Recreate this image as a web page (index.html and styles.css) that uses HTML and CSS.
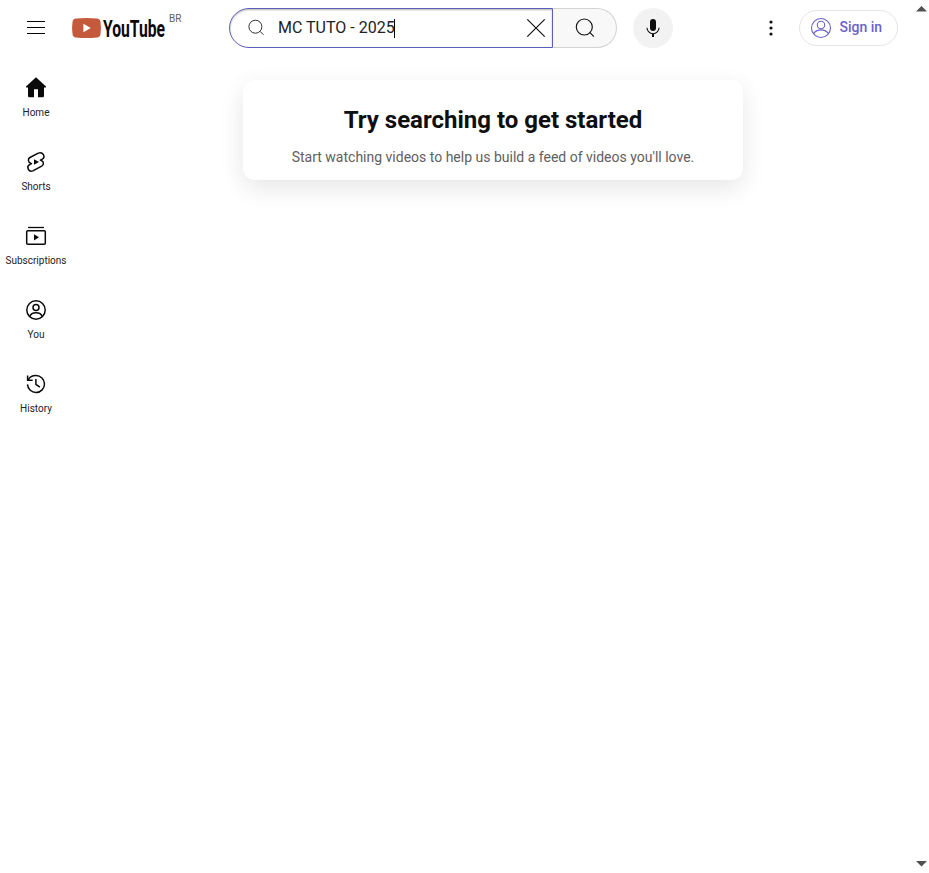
FILE: index.html
```html
<!DOCTYPE html>
<html lang="en">
<head>
<meta charset="utf-8">
<title>YouTube</title>
<link rel="stylesheet" href="styles.css">
</head>
<body>
<div class="app">
  <header class="masthead">
    <div class="start">
      <svg class="icon" viewBox="0 0 24 24"><path d="M3 5.5h18M3 11.5h18M3 17.5h18" fill="none" stroke="#030303"/></svg>
      <a class="logo">
        <svg width="94" height="20" viewBox="0 0 94 20">
          <path d="M4 .5Q14.500-.5 25 .5q3 .3 3.500 3.500q.9 6 0 12q-.5 3.200-3.500 3.500q-10.500 1-21 0q-3-.3-3.500-3.500q-.9-6 0-12Q1 .8 4 .5z" fill="#c4593b"/>
          <path d="M11.400 5.800v8.400l7.300-4.200z" fill="#fff"/>
          <g transform="translate(31 18.700) scale(.7 1)"><text class="wordmark" textLength="88.600" lengthAdjust="spacingAndGlyphs">YouTube</text></g>
        </svg>
        <span class="country">BR</span>
      </a>
    </div>
    <div class="center">
      <div class="field">
        <svg class="glass" width="18" height="18" viewBox="0 0 18 18"><g fill="none" stroke="#333"><circle cx="7.400" cy="7.700" r="6.500"/><path d="M12 12.300l3.500 3.500"/></g></svg>
        <span class="query">MC TUTO - 2025</span><span class="caret"></span>
        <svg class="clear" width="24" height="24" viewBox="0 0 24 24"><path d="M3.300 3.300l17.400 17.400M20.700 3.300L3.300 20.700" fill="none" stroke="#0f0f0f" stroke-width="1.150"/></svg>
      </div>
      <div class="submit"><svg class="icon" viewBox="0 0 24 24"><g fill="none" stroke="#0f0f0f" stroke-width="1.150"><circle cx="11.300" cy="11" r="8"/><path d="M17 16.700l3.900 3.900"/></g></svg></div>
      <div class="mic"><svg class="icon" viewBox="0 0 24 24"><rect x="9" y="3" width="6" height="12" rx="3" fill="#0f0f0f"/><path d="M6 11.700a6 6 0 0 0 12 0" fill="none" stroke="#0f0f0f" stroke-width="1.100"/><path d="M11 17.700h2v3.200h-2z" fill="#0f0f0f"/></svg></div>
    </div>
    <div class="end">
      <svg class="icon" viewBox="0 0 24 24"><g fill="#0f0f0f"><circle cx="12" cy="6" r="1.600"/><circle cx="12" cy="12" r="1.600"/><circle cx="12" cy="18" r="1.600"/></g></svg>
      <a class="signin">
        <svg class="icon" viewBox="0 0 24 24"><g fill="none" stroke="#6a61cc" stroke-width="1.100"><circle cx="12" cy="12" r="9.500"/><circle cx="12" cy="9" r="3.700"/><path d="M4.600 17.800c1.500-2.600 4.200-3.900 7.400-3.900s5.900 1.300 7.400 3.900"/></g></svg>
        <span>Sign in</span>
      </a>
    </div>
  </header>
  <div class="body">
    <nav class="guide">
      <a class="entry"><svg class="icon" viewBox="0 0 24 24"><path d="M12 1.200L22 10.400v1.200h-2V20q0 1.200-1.200 1.200H14v-8h-4v8H5.200Q4 21.200 4 20v-8.400H2v-1.200z" fill="#0a0a0a"/></svg><span>Home</span></a>
      <a class="entry"><svg class="icon" viewBox="0 0 24 24"><path d="M14.300 3.100L5.900 7.500C3.600 8.900 4 12.200 6.600 13.200l.9.400-1.900 1c-3.500 2.100-1.200 7.700 3.200 6.300l8.900-4.700c2.500-1.400 2.100-4.700-.4-5.700l-.9-.4 1.900-1c3.500-2.100.7-7.800-4-6z" fill="none" stroke="#0a0a0a" stroke-width="1.500" stroke-linejoin="round"/><path d="M10 9.200v5.600l5-2.800z" fill="#0a0a0a"/></svg><span>Shorts</span></a>
      <a class="entry"><svg class="icon" viewBox="0 0 24 24"><path d="M4 3.500h16" fill="none" stroke="#0a0a0a" stroke-width="1.300"/><rect x="2.700" y="6.700" width="18.600" height="13.600" rx="1" fill="none" stroke="#0a0a0a" stroke-width="1.500"/><path d="M10 10.200v6.200l5-3.100z" fill="#0a0a0a"/></svg><span>Subscriptions</span></a>
      <a class="entry"><svg class="icon" viewBox="0 0 24 24"><g fill="none" stroke="#0a0a0a" stroke-width="1.500"><circle cx="12" cy="12" r="9.200"/><circle cx="12" cy="9.500" r="3"/><path d="M5.700 18.600c.9-2.700 3.200-3.900 6.300-3.900s5.400 1.200 6.300 3.900"/></g></svg><span>You</span></a>
      <a class="entry"><svg class="icon" viewBox="0 0 24 24"><g fill="none" stroke="#0a0a0a" stroke-width="1.500"><path d="M3.600 3.500v4.700h5"/><path d="M4.100 8C5.400 5.300 8.500 3.500 12 3.500a8.500 8.500 0 1 1-8.500 8.900"/><path d="M11.900 7v5.300l4 2.900"/></g></svg><span>History</span></a>
    </nav>
    <main class="feed">
      <section class="nudge">
        <h1>Try searching to get started</h1>
        <p>Start watching videos to help us build a feed of videos you'll love.</p>
      </section>
    </main>
  </div>
</div>
<div class="scrollbar">
  <svg width="11" height="6" viewBox="0 0 11 6"><path d="M0 5.500L5.500 0L11 5.500z" fill="#505050"/></svg>
  <svg width="11" height="6" viewBox="0 0 11 6"><path d="M0 0h11L5.500 5.500z" fill="#505050"/></svg>
</div>
</body>
</html>
```
FILE: styles.css
```css
* { box-sizing: border-box; }
html, body { height: 100%; }
body {
  margin: 0;
  display: flex;
  overflow: hidden;
  background: #fff;
  color: #0f0f0f;
  font-family: Roboto, Arial, sans-serif;
}
svg { display: block; flex: none; }
.icon { width: 24px; height: 24px; }
.app { flex: 1; min-width: 0; }
.masthead {
  height: 56px;
  display: flex;
  align-items: center;
  padding: 0 16px 0 24px;
}
.start { width: 205px; display: flex; align-items: center; gap: 24px; }
.logo { display: flex; align-items: center; }
.logo svg { overflow: visible; }
.wordmark { font-family: Roboto, Arial, sans-serif; font-size: 23.500px; font-weight: 700; fill: #0a0a0a; }
.country { margin: 0 0 18px 3px; font-size: 10px; line-height: 12px; color: #606060; }
.center { display: flex; align-items: center; }
.field {
  width: 324px;
  height: 40px;
  display: flex;
  align-items: center;
  padding: 0 4px 0 18px;
  border: 1px solid #5c5fb8;
  border-radius: 40px 0 0 40px;
  box-shadow: inset 0 1px 2px rgba(0, 0, 0, .3);
}
.query { margin-left: 12px; font-size: 16px; line-height: 24px; color: #222; white-space: pre; }
.caret { width: 1px; height: 19px; margin-left: -1px; background: #000; }
.clear { margin-left: auto; }
.submit {
  width: 64px;
  height: 40px;
  display: flex;
  align-items: center;
  justify-content: center;
  background: #f8f8f8;
  border: 1px solid #d3d3d3;
  border-left: 0;
  border-radius: 0 40px 40px 0;
}
.mic {
  width: 40px;
  height: 40px;
  margin-left: 16px;
  display: flex;
  align-items: center;
  justify-content: center;
  border-radius: 50%;
  background: #f2f2f2;
}
.end { margin-left: auto; display: flex; align-items: center; gap: 16px; }
.signin {
  width: 99px;
  height: 36px;
  display: flex;
  align-items: center;
  gap: 6.500px;
  padding: 0 0 0 9px;
  border: 1px solid #e5e5e5;
  border-radius: 18px;
  color: #6a61cc;
  font-size: 14px;
  font-weight: 500;
  white-space: nowrap;
}
.signin span { padding-bottom: 2px; }
.body { display: flex; }
.guide { width: 72px; padding-top: 4px; }
.entry {
  height: 74px;
  padding-top: 16px;
  display: flex;
  flex-direction: column;
  align-items: center;
  gap: 6px;
  font-size: 10px;
  line-height: 14px;
  color: #222;
}
.feed { flex: 1; display: flex; justify-content: center; padding-top: 24px; }
.nudge {
  width: 500px;
  height: 100px;
  padding-top: 24px;
  border-radius: 12px;
  text-align: center;
  box-shadow: 0 8px 24px rgba(0, 0, 0, .1);
}
h1 { margin: 0 0 12px; font-size: 24px; line-height: 32px; font-weight: 700; }
p { margin: 0; font-size: 14px; line-height: 18px; color: #606060; }
.scrollbar {
  width: 15px;
  display: flex;
  flex-direction: column;
  align-items: center;
  justify-content: space-between;
  padding: 6px 0;
}
```
